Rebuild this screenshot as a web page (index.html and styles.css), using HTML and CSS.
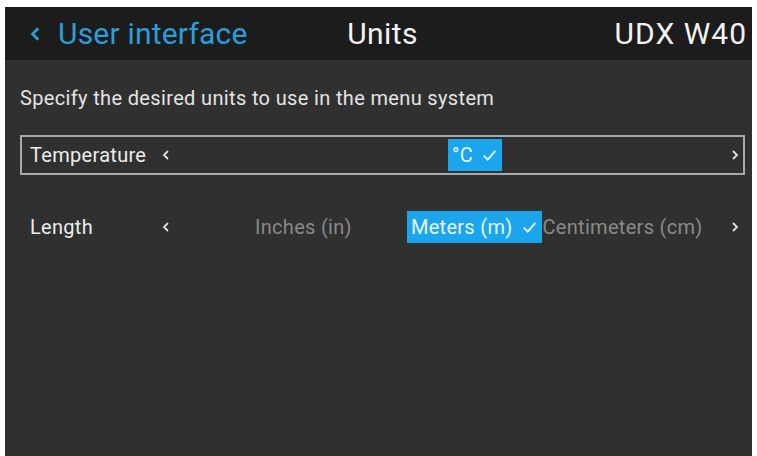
FILE: index.html
```html
<!DOCTYPE html>
<html lang="en">
<head>
    <meta charset="UTF-8">
    <meta name="viewport" content="width=device-width, initial-scale=1.0">
    <title>Units</title>
    <link rel="stylesheet" href="styles.css">
</head>
<body>

    <div class="screen">
        <header class="top-bar">
            <div class="back">
                <svg class="back-icon" viewBox="0 0 10 14"><polyline points="7,2 2,7 7,12"/></svg>
                <span>User interface</span>
            </div>
            <div class="title">Units</div>
            <div class="device">UDX W40</div>
        </header>

        <main class="content">
            <p class="intro">Specify the desired units to use in the menu system</p>

            <div class="setting focused">
                <span class="label">Temperature</span>
                <svg class="chev" viewBox="0 0 8 12"><polyline points="6,2 2,6 6,10"/></svg>
                <div class="values">
                    <span class="option selected celsius">°C
                        <svg class="check" viewBox="0 0 14 12"><polyline points="2,6.5 5.5,10 12,2.5"/></svg>
                    </span>
                </div>
                <svg class="chev" viewBox="0 0 8 12"><polyline points="2,2 6,6 2,10"/></svg>
            </div>

            <div class="setting">
                <span class="label">Length</span>
                <svg class="chev" viewBox="0 0 8 12"><polyline points="6,2 2,6 6,10"/></svg>
                <div class="values">
                    <span class="option dim inches">Inches (in)</span>
                    <span class="option selected meters">Meters (m)
                        <svg class="check" viewBox="0 0 14 12"><polyline points="2,6.5 5.5,10 12,2.5"/></svg>
                    </span>
                    <span class="option dim cm">Centimeters (cm)</span>
                </div>
                <svg class="chev" viewBox="0 0 8 12"><polyline points="2,2 6,6 2,10"/></svg>
            </div>
        </main>
    </div>

</body>
</html>
```

FILE: styles.css
```css
body { margin: 0; background-color: #ffffff; font-family: Roboto, "Liberation Sans", sans-serif; height: 456px; overflow: hidden; }

.screen { margin: 7px 5px 0 5px; height: 449px; display: flex; flex-direction: column; background-color: #303030; }

/* Barra superior */
.top-bar { height: 53px; background-color: #1c1c1c; display: flex; align-items: center; padding: 0 5px 0 25px; position: relative; font-size: 30px; letter-spacing: 0.2px; }
.back { display: flex; align-items: center; color: #2b9ed8; }
.back-icon { width: 12px; height: 16px; margin-right: 16px; fill: none; stroke: #2b9ed8; stroke-width: 2.4; }
.title { position: absolute; left: 8px; right: 0; text-align: center; color: #f2f2f2; letter-spacing: 0.4px; pointer-events: none; }
.device { margin-left: auto; color: #f2f2f2; letter-spacing: 1px; }

/* Contenido */
.content { padding: 0 7px 0 15px; }
.intro { color: #e4e4e4; font-size: 20px; letter-spacing: 0.35px; line-height: 24px; margin: 26px 0 25px 0; }

.setting { height: 36px; display: flex; align-items: center; padding: 0 4px 0 8px; color: #ececec; font-size: 20px; letter-spacing: 0.3px; border: 2px solid transparent; margin-bottom: 32px; }
.setting.focused { border-color: #a9a9a9; }
.label { width: 132px; }
.chev { width: 8px; height: 12px; fill: none; stroke: #e0e0e0; stroke-width: 1.8; }
.values { flex: 1; display: flex; align-items: center; }
.option { display: flex; align-items: center; height: 32px; padding: 0 4px; white-space: nowrap; }
.option.dim { color: #8a8a8a; }
.option.selected { background-color: #1ba5ec; color: #e8f7ff; }
.check { width: 17px; height: 14px; margin-left: 8px; fill: none; stroke: #e8f7ff; stroke-width: 1.5; }
.celsius { margin-left: 278px; }
.inches { margin-left: 81px; margin-right: 51px; }
.meters { padding-right: 4px; }
.cm { padding-left: 1px; }
```
